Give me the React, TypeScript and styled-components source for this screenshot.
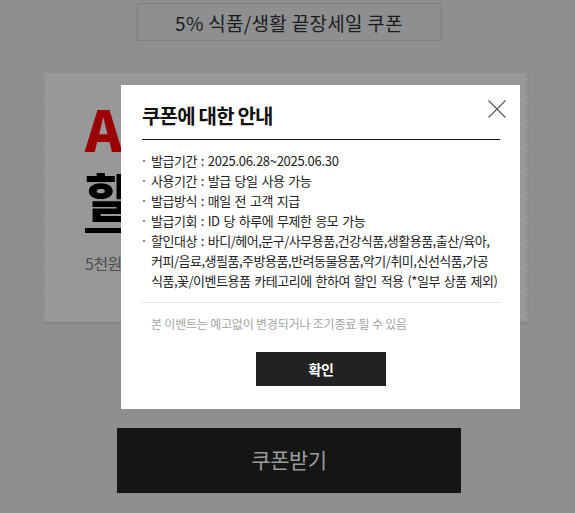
import React from "react";
import styled, { createGlobalStyle } from "styled-components";

const Global = createGlobalStyle`
  html, body { margin: 0; padding: 0; }
  body { font-family: "Noto Sans CJK KR", "Noto Sans", sans-serif; }
  * { box-sizing: border-box; }
`;

const Page = styled.div`
  position: relative;
  width: 575px;
  height: 513px;
  overflow: hidden;
  background: #8e8f91;
  font-family: "Noto Sans CJK KR", "Noto Sans", sans-serif;
`;

const Column = styled.div`
  display: flex;
  flex-direction: column;
  align-items: center;
  padding: 3px 0 0 3px;
`;

const TitleBox = styled.div`
  width: 305px;
  height: 38px;
  border: 1px solid #7e7f81;
  display: flex;
  align-items: center;
  justify-content: center;
  font-size: 19px;
  letter-spacing: 0.3px;
  color: #1c1c1d;
`;

const Coupon = styled.div`
  position: relative;
  align-self: flex-start;
  margin: 32px 0 0 40px;
  width: 485px;
  height: 249px;
  background: #989898;
  padding: 27px 42px 0;
  box-shadow: 0 1px 2px rgba(0, 0, 0, 0.12);

  &::before,
  &::after {
    content: "";
    position: absolute;
    top: 0;
    bottom: 0;
    width: 4px;
    background-image: radial-gradient(circle, #8e8f91 1.6px, #8a8a8b 2.1px, transparent 2.4px);
    background-size: 4px 6px;
  }
  &::before { left: -2px; }
  &::after { right: -2px; }
`;

const Headline = styled.div`
  font-size: 56px;
  line-height: 1;
  font-weight: 900;
  color: #9a0003;
  letter-spacing: -2px;
  white-space: nowrap;
`;

const SubHeadline = styled.div`
  display: inline-block;
  margin-top: 14px;
  font-size: 51px;
  line-height: 1;
  font-weight: 900;
  color: #000;
  letter-spacing: -2px;
  padding-bottom: 7px;
  border-bottom: 5px solid #000;
  white-space: nowrap;
`;

const CouponNote = styled.div`
  margin-top: 18px;
  font-size: 16px;
  line-height: 24px;
  color: #4d4d4e;
  letter-spacing: -0.5px;
`;

const GetButton = styled.button`
  margin-top: 106px;
  width: 344px;
  height: 65px;
  border: none;
  background: #151515;
  color: #9c9c9c;
  font-family: inherit;
  font-size: 21px;
  letter-spacing: -0.5px;
  display: flex;
  align-items: center;
  justify-content: center;
  padding: 0 0 3px;
`;

const Modal = styled.div`
  position: absolute;
  left: 121px;
  top: 85px;
  width: 399px;
  background: #fff;
  padding: 0 20px 23px 21px;
`;

const ModalHeader = styled.div`
  padding: 17px 0 9px;
  border-bottom: 1px solid #111;
`;

const ModalTitle = styled.h2`
  margin: 0;
  font-size: 20px;
  line-height: 28px;
  font-weight: 700;
  letter-spacing: -0.8px;
  color: #111;
`;

const CloseButton = styled.button`
  position: absolute;
  top: 15px;
  right: 14px;
  width: 18px;
  height: 18px;
  padding: 0;
  border: none;
  background: none;
  display: flex;
`;

const InfoList = styled.ul`
  list-style: none;
  margin: 11px 0 0;
  padding: 0;
`;

const InfoItem = styled.li`
  display: grid;
  grid-template-columns: 9px 1fr;
  font-size: 13px;
  line-height: 20px;
  letter-spacing: -0.5px;
  word-spacing: 1.5px;
  color: #222;
`;

const Bullet = styled.span`
  width: 2px;
  height: 2px;
  margin: 9px 0 0 1px;
  background: #8a8a8a;
`;

const Num = styled.span`
  letter-spacing: -0.3px;
`;

const Divider = styled.hr`
  margin: 11px 0 0;
  border: none;
  border-top: 1px solid #e3e3e3;
`;

const Notice = styled.p`
  margin: 12px 0 0;
  padding-left: 9px;
  font-size: 12px;
  line-height: 18px;
  letter-spacing: -0.2px;
  color: #a5a5a5;
`;

const ConfirmButton = styled.button`
  display: flex;
  align-items: center;
  justify-content: center;
  margin: 19px auto 0;
  width: 130px;
  height: 34px;
  border: none;
  background: #222;
  color: #fff;
  font-family: inherit;
  font-size: 14px;
  font-weight: 700;
  letter-spacing: -0.5px;
  padding: 0;
`;

const items: React.ReactNode[] = [
  <>발급기간 : <Num>2025.06.28~2025.06.30</Num></>,
  <>사용기간 : 발급 당일 사용 가능</>,
  <>발급방식 : 매일 전 고객 지급</>,
  <>발급기회 : ID 당 하루에 무제한 응모 가능</>,
  <>
    할인대상 : 바디/헤어,문구/사무용품,건강식품,생활용품,출산/육아,
    <br />
    커피/음료,생필품,주방용품,반려동물용품,악기/취미,신선식품,가공
    <br />
    식품,꽃/이벤트용품 카테고리에 한하여 할인 적용 (*일부 상품 제외)
  </>,
];

export default function App() {
  return (
    <>
      <Global />
      <Page>
        <Column>
          <TitleBox>5% 식품/생활 끝장세일 쿠폰</TitleBox>
          <Coupon>
            <Headline>ALL 5%</Headline>
            <SubHeadline>할인쿠폰</SubHeadline>
            <CouponNote>5천원 이상 구매 시 사용 가능</CouponNote>
          </Coupon>
          <GetButton>쿠폰받기</GetButton>
        </Column>

        <Modal role="dialog">
          <ModalHeader>
            <ModalTitle>쿠폰에 대한 안내</ModalTitle>
          </ModalHeader>
          <CloseButton aria-label="닫기">
            <svg width="18" height="18" viewBox="0 0 18 18">
              <path d="M0.5 0.5 L17.5 17.5 M17.5 0.5 L0.5 17.5" stroke="#55555f" strokeWidth="1.1" fill="none" />
            </svg>
          </CloseButton>
          <InfoList>
            {items.map((c, i) => (
              <InfoItem key={i}>
                <Bullet />
                <span>{c}</span>
              </InfoItem>
            ))}
          </InfoList>
          <Divider />
          <Notice>본 이벤트는 예고없이 변경되거나 조기종료 될 수 있음</Notice>
          <ConfirmButton>확인</ConfirmButton>
        </Modal>
      </Page>
    </>
  );
}
